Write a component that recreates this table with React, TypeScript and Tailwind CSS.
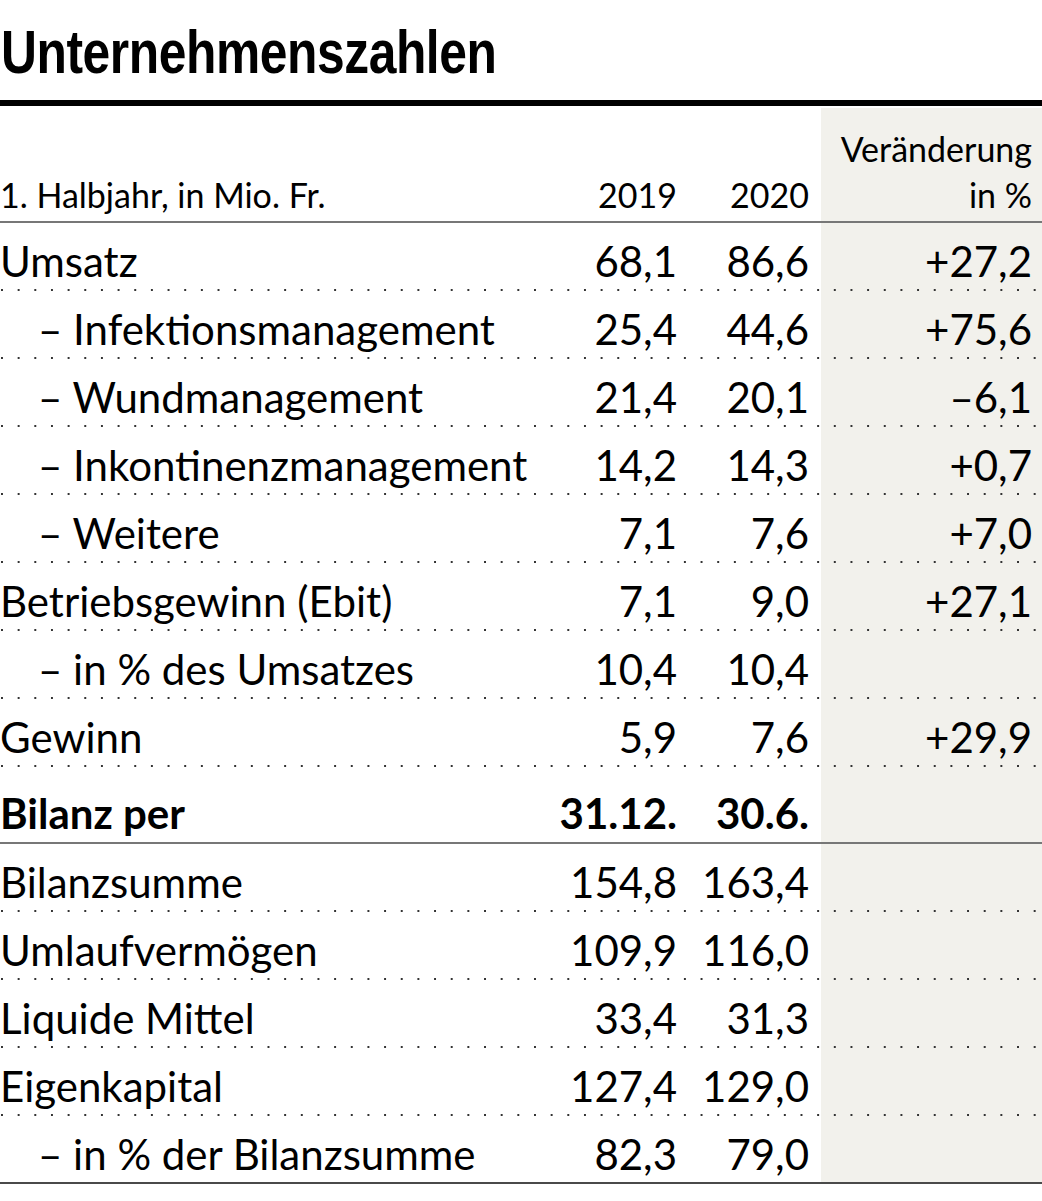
type RowData = {
  label: string;
  a: string;
  b: string;
  c?: string;
  indent?: boolean;
};

const UPPER: RowData[] = [
  { label: "Umsatz", a: "68,1", b: "86,6", c: "+27,2" },
  { label: "Infektionsmanagement", a: "25,4", b: "44,6", c: "+75,6", indent: true },
  { label: "Wundmanagement", a: "21,4", b: "20,1", c: "–6,1", indent: true },
  { label: "Inkontinenzmanagement", a: "14,2", b: "14,3", c: "+0,7", indent: true },
  { label: "Weitere", a: "7,1", b: "7,6", c: "+7,0", indent: true },
  { label: "Betriebsgewinn (Ebit)", a: "7,1", b: "9,0", c: "+27,1" },
  { label: "in % des Umsatzes", a: "10,4", b: "10,4", indent: true },
  { label: "Gewinn", a: "5,9", b: "7,6", c: "+29,9" },
];

const LOWER: RowData[] = [
  { label: "Bilanzsumme", a: "154,8", b: "163,4" },
  { label: "Umlaufvermögen", a: "109,9", b: "116,0" },
  { label: "Liquide Mittel", a: "33,4", b: "31,3" },
  { label: "Eigenkapital", a: "127,4", b: "129,0" },
  { label: "in % der Bilanzsumme", a: "82,3", b: "79,0", indent: true },
];

const cols = "grid grid-cols-[559px_118px_144px_221px]";

function Dots() {
  return (
    <div className="h-[2px] bg-[linear-gradient(to_right,#333_2px,transparent_2px)] bg-[length:16.67px_2px] bg-[position:1px_0] bg-repeat-x" />
  );
}

function Row({ row }: { row: RowData }) {
  return (
    <div className={`${cols} h-[66px] items-end pb-[7px] text-[42px] leading-none`}>
      <div className={`whitespace-nowrap ${row.indent ? "pl-[38px]" : ""}`}>
        {row.indent ? `– ${row.label}` : row.label}
      </div>
      <div className="text-right">{row.a}</div>
      <div className="text-right pr-[12px]">{row.b}</div>
      <div className="text-right pr-[10px]">{row.c ?? ""}</div>
    </div>
  );
}

export default function App() {
  return (
    <div className="w-[1042px] h-[1201px] bg-white text-black font-['Lato',sans-serif]">
      <div className="h-[100px] flex items-end pb-[17px] pl-[1px]">
        {/* condensed headline: no narrow face installed, so squeeze the bold sans */}
        <h1 className="origin-left scale-x-[0.815] whitespace-nowrap text-[61px] leading-none font-bold tracking-[-0.5px] font-['Liberation_Sans',sans-serif]">
          Unternehmenszahlen
        </h1>
      </div>
      <div className="h-[6px] bg-black" />

      <div className="mt-[2px] bg-[linear-gradient(to_right,#ffffff_821px,#f2f1ec_821px)]">
        {/* header */}
        <div className={`${cols} h-[113px] items-end pb-[3px] text-[34px] leading-[46px]`}>
          <div>1. Halbjahr, in Mio. Fr.</div>
          <div className="text-right">2019</div>
          <div className="text-right pr-[12px]">2020</div>
          <div className="text-right pr-[10px]">
            Veränderung
            <br />
            in %
          </div>
        </div>
        <div className="h-[2px] bg-[#777]" />

        {UPPER.map((r) => (
          <div key={r.label}>
            <Row row={r} />
            <Dots />
          </div>
        ))}

        <div className={`${cols} h-[75px] items-end pb-[8px] text-[42px] leading-none font-bold`}>
          <div>Bilanz per</div>
          <div className="text-right">31.12.</div>
          <div className="text-right pr-[12px]">30.6.</div>
          <div />
        </div>
        <div className="h-[2px] bg-[#777]" />

        {LOWER.map((r, i) => (
          <div key={r.label}>
            <Row row={r} />
            {i < LOWER.length - 1 && <Dots />}
          </div>
        ))}
      </div>
      <div className="h-[2px] bg-[#4a4a4a]" />
    </div>
  );
}
